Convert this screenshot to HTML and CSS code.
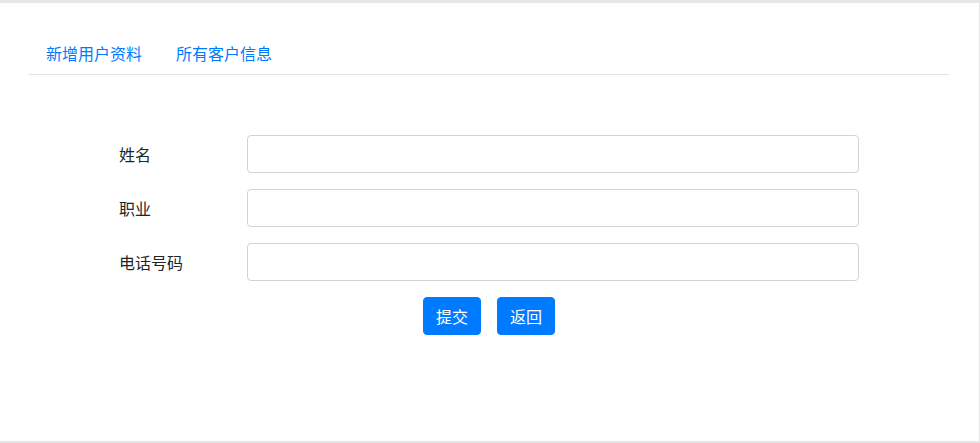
FILE: index.html
```html
<!DOCTYPE html>
<html lang="zh-CN">
<head>
<meta charset="utf-8">
<title>新增用户资料</title>
<link rel="stylesheet" href="styles.css">
</head>
<body>
<div class="page">
  <div class="container">
    <ul class="nav-tabs">
      <li><a class="nav-link" href="#">新增用户资料</a></li>
      <li><a class="nav-link" href="#">所有客户信息</a></li>
    </ul>
    <form class="form">
      <div class="row">
        <label class="label">姓名</label>
        <input class="input" type="text">
      </div>
      <div class="row">
        <label class="label">职业</label>
        <input class="input" type="text">
      </div>
      <div class="row">
        <label class="label">电话号码</label>
        <input class="input" type="text">
      </div>
      <div class="actions">
        <button class="btn" type="button">提交</button>
        <button class="btn" type="button">返回</button>
      </div>
    </form>
  </div>
</div>
</body>
</html>
```

FILE: styles.css
```css
* { box-sizing: border-box; }
html, body {
  margin: 0;
  padding: 0;
  background: #e6e6e6;
}
body {
  font-family: "Microsoft YaHei", "Noto Sans CJK SC", "Noto Sans", sans-serif;
  font-size: 16px;
  line-height: 1.5;
  color: #212529;
}
.page {
  width: 980px;
  height: 443px;
  background: #fff;
  border-top: 3px solid #e6e6e6;
  border-right: 1px solid #e6e6e6;
  border-bottom: 2px solid #e6e6e6;
  padding: 30px 30px 0 29px;
}
.container {
  width: 920px;
}
.nav-tabs {
  list-style: none;
  margin: 0;
  padding: 0;
  display: flex;
  gap: 1px;
  border-bottom: 1px solid #dee2e6;
}
.nav-link {
  display: block;
  padding: 8px 16px 9px 17px;
  color: #007bff;
  text-decoration: none;
}
.form {
  width: 740px;
  margin: 60px auto 0;
  display: flex;
  flex-direction: column;
  gap: 16px;
}
.row {
  display: flex;
  align-items: center;
}
.label {
  width: 128px;
  flex: none;
  padding-bottom: 1px;
}
.input {
  width: 612px;
  height: 38px;
  border: 1px solid #ced4da;
  border-radius: 4px;
  padding: 6px 12px;
  font: inherit;
  background: #fff;
}
.actions {
  display: flex;
  justify-content: center;
  gap: 16px;
}
.btn {
  height: 38px;
  padding: 0 12px;
  border: 1px solid #007bff;
  border-radius: 4px;
  background: #007bff;
  color: #fff;
  font: inherit;
  line-height: 1.5;
  cursor: pointer;
}
```
